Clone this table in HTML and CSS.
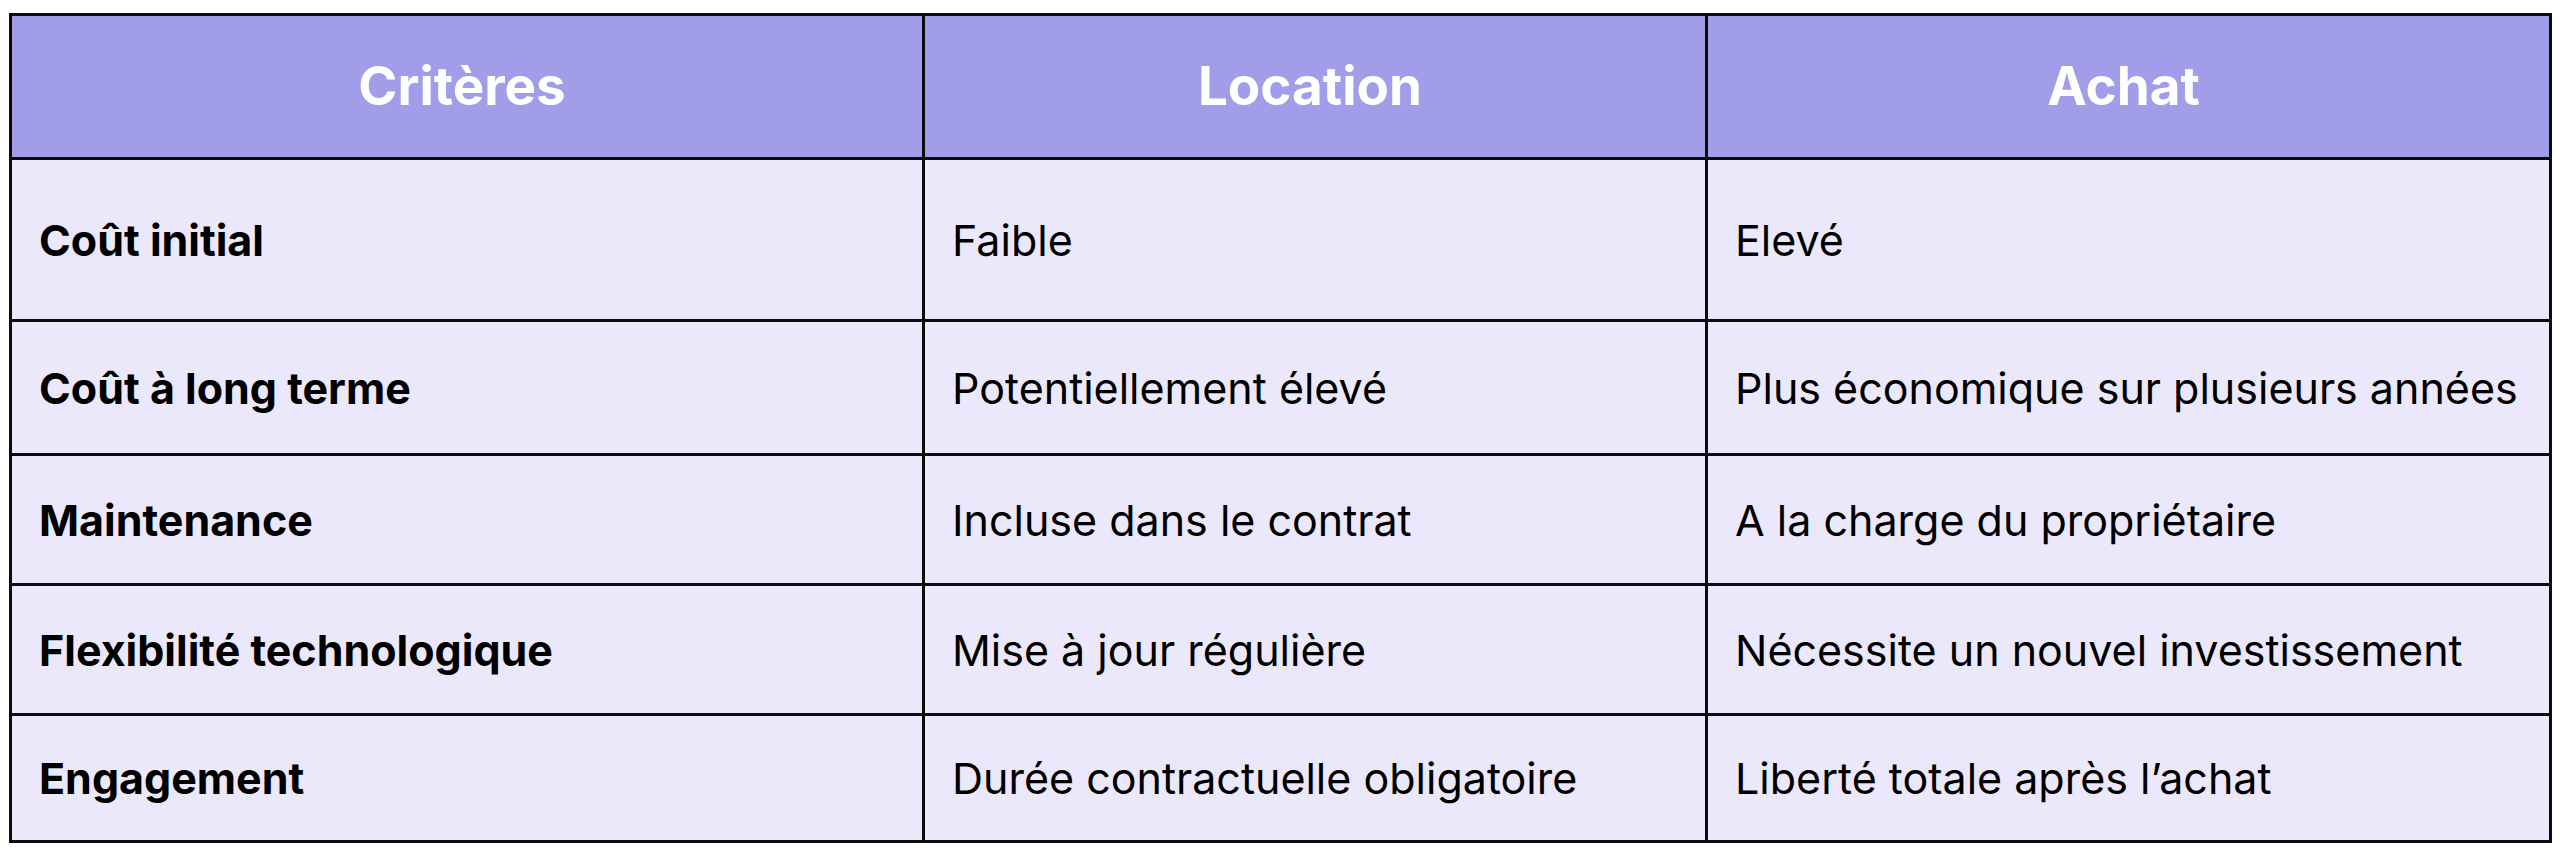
FILE: index.html
```html
<!DOCTYPE html>
<html lang="fr">
<head>
<meta charset="utf-8">
<title>Location vs Achat</title>
<link rel="stylesheet" href="styles.css">
</head>
<body>
<div class="page">
  <div class="table" role="table">
    <div class="cell head" role="columnheader">Critères</div>
    <div class="cell head" role="columnheader">Location</div>
    <div class="cell head" role="columnheader">Achat</div>

    <div class="cell label">Coût initial</div>
    <div class="cell">Faible</div>
    <div class="cell">Elevé</div>

    <div class="cell label">Coût à long terme</div>
    <div class="cell">Potentiellement élevé</div>
    <div class="cell">Plus économique sur plusieurs années</div>

    <div class="cell label">Maintenance</div>
    <div class="cell">Incluse dans le contrat</div>
    <div class="cell">A la charge du propriétaire</div>

    <div class="cell label">Flexibilité technologique</div>
    <div class="cell">Mise à jour régulière</div>
    <div class="cell">Nécessite un nouvel investissement</div>

    <div class="cell label">Engagement</div>
    <div class="cell">Durée contractuelle obligatoire</div>
    <div class="cell">Liberté totale après l’achat</div>
  </div>
</div>
</body>
</html>
```

FILE: styles.css
```css
html, body {
  margin: 0;
  padding: 0;
  background: #ffffff;
}

.page {
  padding: 13px 0 0 9px;
}

.table {
  display: grid;
  width: 2543px;
  box-sizing: border-box;
  grid-template-columns: 910px 780px 841px;
  grid-template-rows: 141px 159px 131px 127px 127px 124px;
  gap: 3px;
  padding: 3px;
  background: #0b0b0d;
  font-family: Inter, "Noto Sans", "Liberation Sans", sans-serif;
  font-size: 43px;
  color: #000000;
}

.cell {
  display: flex;
  align-items: center;
  padding: 0 27px;
  background: #ebe8fb;
  white-space: nowrap;
  overflow: hidden;
}

.cell.head {
  justify-content: center;
  padding: 0 33px 2px 23px;
  background: #a29de8;
  color: #ffffff;
  font-size: 53px;
  font-weight: 700;
}

.cell.label {
  font-weight: 700;
}
```
